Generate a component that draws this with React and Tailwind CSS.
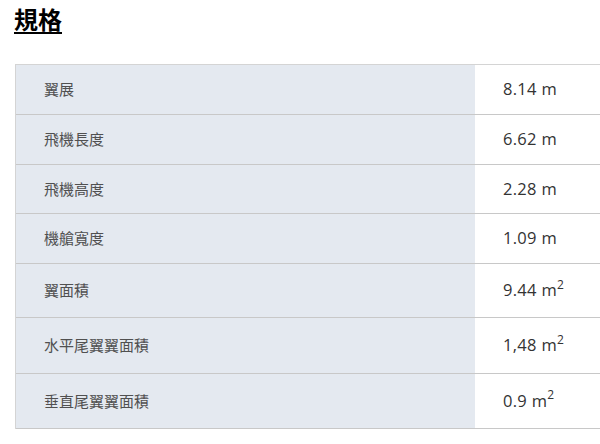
const specs = [
  { label: "翼展", value: "8.14", unit: "m", h: "h-[50px]" },
  { label: "飛機長度", value: "6.62", unit: "m", h: "h-[50px]" },
  { label: "飛機高度", value: "2.28", unit: "m", h: "h-[49px]" },
  { label: "機艙寬度", value: "1.09", unit: "m", h: "h-[50px]" },
  { label: "翼面積", value: "9.44", unit: "m", sup: "2", h: "h-[54px]" },
  { label: "水平尾翼翼面積", value: "1,48", unit: "m", sup: "2", h: "h-[56px]" },
  { label: "垂直尾翼翼面積", value: "0.9", unit: "m", sup: "2", h: "h-[55px]" },
];

export default function App() {
  return (
    <div className="w-[600px] h-[444px] overflow-hidden bg-white font-['Open_Sans','Noto_Sans_CJK_TC',sans-serif]">
      <h2 className="pl-[14px] pt-[4px] text-[24px] leading-[32px] font-bold text-black">
        <span className="underline decoration-2 underline-offset-[3px]">規格</span>
      </h2>

      {/* spec table */}
      <div className="ml-[15px] mt-[28px] border-t border-l border-[#d4d4d4]">
        {specs.map((s) => (
          <div key={s.label} className={`flex border-b border-[#c8c8c8] ${s.h}`}>
            <div className="w-[459px] bg-[#e4e9f0] pl-[28px] flex items-center text-[15px] text-[#505050]">
              {s.label}
            </div>
            <div className="flex-1 bg-white pl-[28px] flex items-center text-[16.5px] text-[#333] tracking-[0.3px]">
              <span>
                {s.value} {s.unit}
                {s.sup && <sup className="text-[12px] -top-[0.6em]">{s.sup}</sup>}
              </span>
            </div>
          </div>
        ))}
      </div>
    </div>
  );
}
